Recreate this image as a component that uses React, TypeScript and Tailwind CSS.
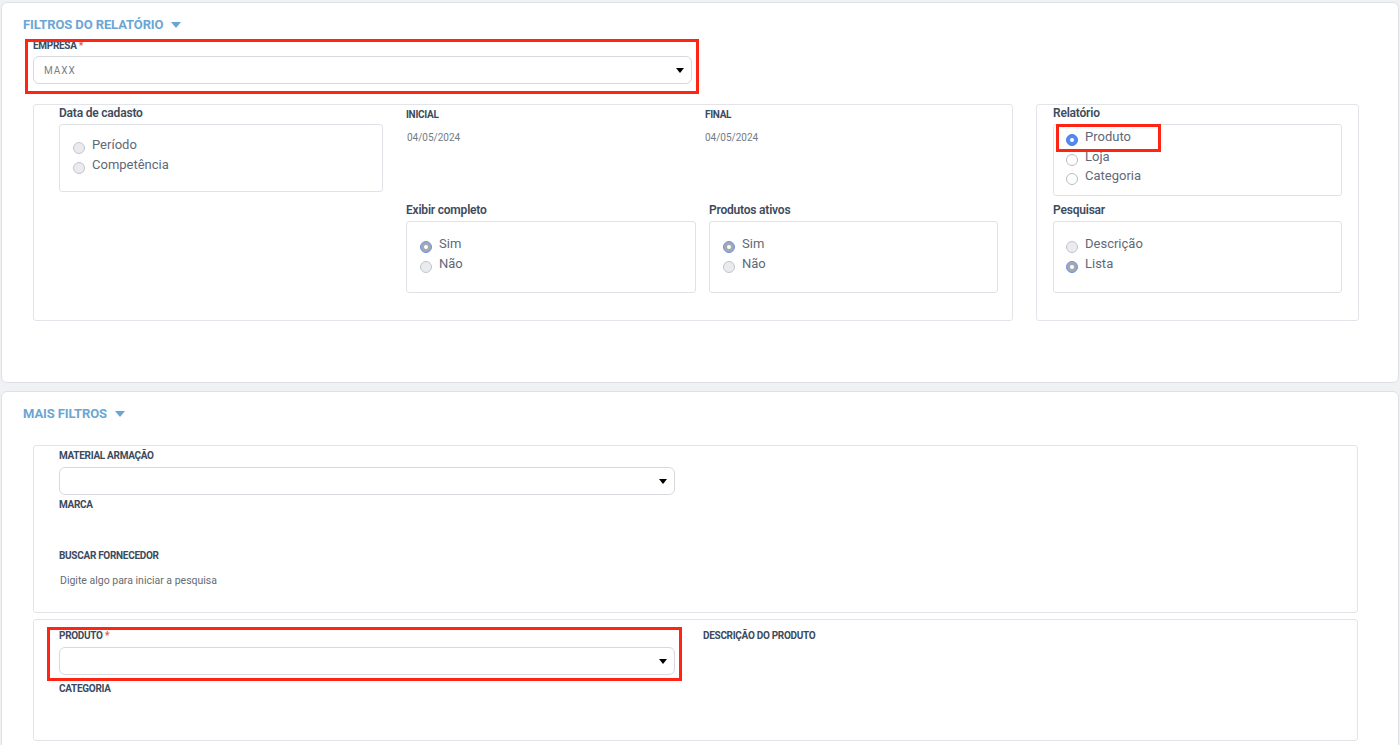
import React from "react";

type RadioKind = "off" | "offMuted" | "onGray" | "onBlue";

const Radio: React.FC<{ kind: RadioKind; label: string }> = ({ kind, label }) => {
  let circle = "";
  if (kind === "off") circle = "bg-white border border-[#b8bcc2]";
  if (kind === "offMuted") circle = "bg-[#e9ebee] border border-[#c2c6cb]";
  if (kind === "onGray") circle = "bg-[#a3a9b0] border-[1.5px] border-[#6e93e6]";
  if (kind === "onBlue") circle = "bg-[#5589ef] border border-[#4b7fe6]";

  return (
    <div className="flex items-start h-[20px]">
      <span
        className={`mt-[7px] w-[12px] h-[12px] rounded-full flex items-center justify-center shrink-0 ${circle}`}
      >
        {(kind === "onGray" || kind === "onBlue") && (
          <span className="w-[4px] h-[4px] rounded-full bg-white" />
        )}
      </span>
      <span className="ml-[7px] text-[13px] leading-[20px] text-[#5e6978]">{label}</span>
    </div>
  );
};

const Caret: React.FC<{ className?: string }> = ({ className }) => (
  <svg width="10" height="6" viewBox="0 0 10 6" className={className}>
    <path d="M0 0 L10 0 L5 6 Z" fill="currentColor" />
  </svg>
);

const SmallLabel: React.FC<{ children: React.ReactNode; required?: boolean; className?: string }> = ({
  children,
  required,
  className = "",
}) => (
  <div className={`text-[10px] leading-[10px] font-bold uppercase text-[#3b4a5d] tracking-[-0.3px] ${className}`}>
    {children}
    {required && <span className="text-[#e5534b]"> *</span>}
  </div>
);

const GroupTitle: React.FC<{ children: React.ReactNode; className?: string }> = ({ children, className = "" }) => (
  <div className={`text-[12px] leading-[14px] font-semibold text-[#3e4b5d] tracking-[-0.2px] ${className}`}>
    {children}
  </div>
);

const SelectBox: React.FC<{ value?: string; className?: string }> = ({ value, className = "" }) => (
  <div
    className={`h-[28px] border border-[#d6d9dd] rounded-[6px] bg-white flex items-center justify-between pl-[10px] pr-[7px] ${className}`}
  >
    <span className="text-[10px] tracking-[1px] text-[#7a7f87]">{value}</span>
    <svg width="8" height="5" viewBox="0 0 8 5" className="text-black">
      <path d="M0 0 L8 0 L4 5 Z" fill="currentColor" />
    </svg>
  </div>
);

const SectionTitle: React.FC<{ children: React.ReactNode }> = ({ children }) => (
  <div className="flex items-center -ml-[10px] h-[16px]">
    <span className="text-[13px] leading-[16px] font-bold uppercase text-[#6ba6d3] tracking-[-0.1px]">
      {children}
    </span>
    <Caret className="ml-[8px] text-[#6ba6d3]" />
  </div>
);

const RedMark: React.FC<{ className: string }> = ({ className }) => (
  <div className={`absolute border-[3px] border-[#ff2414] pointer-events-none ${className}`} />
);

export default function App() {
  return (
    <div
      className="min-h-screen bg-[#eff1f4] pt-[2px] px-[1px] pb-[20px]"
      style={{ fontFamily: "Roboto, 'Liberation Sans', sans-serif" }}
    >
      {/* Filtros do relatório */}
      <div className="relative h-[381px] bg-white border border-[#dde1e6] rounded-[6px] pl-[31px] pt-[14px]">
        <SectionTitle>Filtros do relatório</SectionTitle>

        <SmallLabel required className="mt-[8px]">
          Empresa
        </SmallLabel>
        <SelectBox value="MAXX" className="mt-[5px] w-[659px]" />

        <div className="flex gap-[23px] mt-[20px]">
          {/* bloco datas */}
          <div className="w-[980px] h-[217px] border border-[#e1e4e8] rounded-[3px] flex pl-[25px]">
            <div className="w-[324px] pt-[1px]">
              <GroupTitle>Data de cadasto</GroupTitle>
              <div className="mt-[4px] h-[68px] border border-[#dfe2e6] rounded-[3px] pl-[13px] pt-[10px]">
                <Radio kind="offMuted" label="Período" />
                <Radio kind="offMuted" label="Competência" />
              </div>
            </div>

            <div className="w-[290px] ml-[23px]">
              <SmallLabel className="mt-[5px]">Inicial</SmallLabel>
              <div className="mt-[12px] ml-[1px] text-[10px] leading-[12px] text-[#757b84]">04/05/2024</div>
              <GroupTitle className="mt-[59px]">Exibir completo</GroupTitle>
              <div className="mt-[4px] h-[72px] border border-[#dfe2e6] rounded-[3px] pl-[13px] pt-[12px]">
                <Radio kind="onGray" label="Sim" />
                <Radio kind="offMuted" label="Não" />
              </div>
            </div>

            <div className="w-[289px] ml-[13px]">
              <SmallLabel className="mt-[5px] -ml-[4px]">Final</SmallLabel>
              <div className="mt-[12px] -ml-[4px] text-[10px] leading-[12px] text-[#757b84]">04/05/2024</div>
              <GroupTitle className="mt-[59px]">Produtos ativos</GroupTitle>
              <div className="mt-[4px] h-[72px] border border-[#dfe2e6] rounded-[3px] pl-[13px] pt-[12px]">
                <Radio kind="onGray" label="Sim" />
                <Radio kind="offMuted" label="Não" />
              </div>
            </div>
          </div>

          {/* bloco relatório */}
          <div className="relative w-[323px] h-[217px] border border-[#e1e4e8] rounded-[3px] pl-[16px] pt-[1px]">
            <GroupTitle>Relatório</GroupTitle>
            <div className="mt-[4px] w-[289px] h-[72px] border border-[#dfe2e6] rounded-[3px] pl-[12px] pt-[2px]">
              <Radio kind="onBlue" label="Produto" />
              <Radio kind="off" label="Loja" />
              <div className="-mt-[1px]">
                <Radio kind="off" label="Categoria" />
              </div>
            </div>
            <GroupTitle className="mt-[7px]">Pesquisar</GroupTitle>
            <div className="mt-[4px] w-[289px] h-[72px] border border-[#dfe2e6] rounded-[3px] pl-[12px] pt-[12px]">
              <Radio kind="offMuted" label="Descrição" />
              <Radio kind="onGray" label="Lista" />
            </div>
            <RedMark className="left-[19px] top-[19px] w-[105px] h-[28px]" />
          </div>
        </div>

        <RedMark className="left-[23px] top-[36px] w-[674px] h-[55px]" />
      </div>

      {/* Mais filtros */}
      <div className="mt-[8px] h-[400px] bg-white border border-[#dde1e6] rounded-[6px] pl-[31px] pt-[14px] pr-[41px]">
        <SectionTitle>Mais filtros</SectionTitle>

        <div className="mt-[23px] w-[1325px] h-[168px] border border-[#e1e4e8] rounded-[3px] pl-[25px] pt-[5px]">
          <SmallLabel>Material armação</SmallLabel>
          <SelectBox className="mt-[6px] w-[616px]" />
          <SmallLabel className="mt-[5px]">Marca</SmallLabel>
          <SmallLabel className="mt-[41px]">Buscar fornecedor</SmallLabel>
          <div className="mt-[14px] ml-[1px] text-[10.5px] leading-[12px] text-[#656b73]">
            Digite algo para iniciar a pesquisa
          </div>
        </div>

        <div className="relative mt-[6px] w-[1325px] h-[122px] border border-[#e1e4e8] rounded-[3px] pl-[25px] pt-[11px] flex">
          <div className="w-[616px]">
            <SmallLabel required>Produto</SmallLabel>
            <SelectBox className="mt-[6px]" />
            <SmallLabel className="mt-[9px]">Categoria</SmallLabel>
          </div>
          <div className="ml-[28px]">
            <SmallLabel>Descrição do produto</SmallLabel>
          </div>
          <RedMark className="left-[13px] top-[7px] w-[635px] h-[54px]" />
        </div>
      </div>
    </div>
  );
}
